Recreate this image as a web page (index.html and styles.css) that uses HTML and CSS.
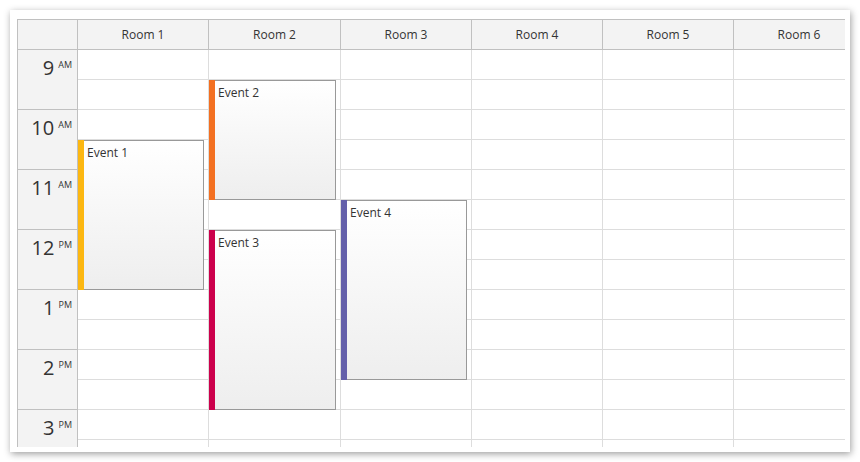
FILE: index.html
```html
<!DOCTYPE html>
<html>
<head>
<meta charset="utf-8">
<link rel="stylesheet" href="styles.css">
</head>
<body>
<div class="frame">
  <div class="cal">
    <div class="head">
      <div class="corner"></div>
      <div class="rh">Room 1</div>
      <div class="rh">Room 2</div>
      <div class="rh">Room 3</div>
      <div class="rh">Room 4</div>
      <div class="rh">Room 5</div>
      <div class="rh">Room 6</div>
    </div>
    <div class="body">
      <div class="times">
        <div class="hour"><span class="h">9</span><span class="ap">AM</span></div>
        <div class="hour"><span class="h">10</span><span class="ap">AM</span></div>
        <div class="hour"><span class="h">11</span><span class="ap">AM</span></div>
        <div class="hour"><span class="h">12</span><span class="ap">PM</span></div>
        <div class="hour"><span class="h">1</span><span class="ap">PM</span></div>
        <div class="hour"><span class="h">2</span><span class="ap">PM</span></div>
        <div class="hour"><span class="h">3</span><span class="ap">PM</span></div>
      </div>
      <div class="col">
        <div class="cell"></div><div class="cell"></div><div class="cell"></div><div class="cell"></div>
        <div class="cell"></div><div class="cell"></div><div class="cell"></div><div class="cell"></div>
        <div class="cell"></div><div class="cell"></div><div class="cell"></div><div class="cell"></div>
        <div class="cell"></div><div class="cell"></div>
        <div class="event" style="top:90px;height:150px"><div class="bar c-yellow"></div><div class="ebox">Event 1</div></div>
      </div>
      <div class="col">
        <div class="cell"></div><div class="cell"></div><div class="cell"></div><div class="cell"></div>
        <div class="cell"></div><div class="cell"></div><div class="cell"></div><div class="cell"></div>
        <div class="cell"></div><div class="cell"></div><div class="cell"></div><div class="cell"></div>
        <div class="cell"></div><div class="cell"></div>
        <div class="event" style="top:30px;height:120px"><div class="bar c-orange"></div><div class="ebox">Event 2</div></div>
        <div class="event" style="top:180px;height:180px"><div class="bar c-red"></div><div class="ebox">Event 3</div></div>
      </div>
      <div class="col">
        <div class="cell"></div><div class="cell"></div><div class="cell"></div><div class="cell"></div>
        <div class="cell"></div><div class="cell"></div><div class="cell"></div><div class="cell"></div>
        <div class="cell"></div><div class="cell"></div><div class="cell"></div><div class="cell"></div>
        <div class="cell"></div><div class="cell"></div>
        <div class="event" style="top:150px;height:180px"><div class="bar c-purple"></div><div class="ebox">Event 4</div></div>
      </div>
      <div class="col">
        <div class="cell"></div><div class="cell"></div><div class="cell"></div><div class="cell"></div>
        <div class="cell"></div><div class="cell"></div><div class="cell"></div><div class="cell"></div>
        <div class="cell"></div><div class="cell"></div><div class="cell"></div><div class="cell"></div>
        <div class="cell"></div><div class="cell"></div>
      </div>
      <div class="col">
        <div class="cell"></div><div class="cell"></div><div class="cell"></div><div class="cell"></div>
        <div class="cell"></div><div class="cell"></div><div class="cell"></div><div class="cell"></div>
        <div class="cell"></div><div class="cell"></div><div class="cell"></div><div class="cell"></div>
        <div class="cell"></div><div class="cell"></div>
      </div>
      <div class="col">
        <div class="cell"></div><div class="cell"></div><div class="cell"></div><div class="cell"></div>
        <div class="cell"></div><div class="cell"></div><div class="cell"></div><div class="cell"></div>
        <div class="cell"></div><div class="cell"></div><div class="cell"></div><div class="cell"></div>
        <div class="cell"></div><div class="cell"></div>
      </div>
    </div>
  </div>
</div>
</body>
</html>
```
FILE: styles.css
```css
html, body {
  margin: 0;
  padding: 0;
  background: #fff;
}
body {
  font-family: "Open Sans", "Noto Sans", sans-serif;
  color: #333;
}
.frame {
  margin: 10px;
  width: 840px;
  height: 442px;
  box-sizing: border-box;
  padding: 9px 5px 5px 7px;
  background: #fff;
  box-shadow: 1px 2px 7px rgba(0, 0, 0, 0.38);
}
.cal {
  width: 828px;
  height: 428px;
  overflow: hidden;
  box-sizing: border-box;
  border-left: 1px solid #c0c0c0;
  border-top: 1px solid #c0c0c0;
}
.head {
  display: flex;
  height: 30px;
  width: max-content;
}
.corner, .rh {
  flex: none;
  box-sizing: border-box;
  height: 30px;
  background: #f3f3f3;
  border-right: 1px solid #c0c0c0;
  border-bottom: 1px solid #c0c0c0;
}
.corner {
  width: 60px;
}
.rh {
  width: 131px;
  display: flex;
  align-items: center;
  justify-content: center;
  font-size: 12px;
  color: #333;
}
.rh:nth-child(3) {
  width: 132px;
}
.body {
  display: flex;
  width: max-content;
}
.times {
  flex: none;
  width: 60px;
  box-sizing: border-box;
  background: #f3f3f3;
  border-right: 1px solid #c0c0c0;
}
.hour {
  height: 60px;
  box-sizing: border-box;
  border-bottom: 1px solid #c0c0c0;
  text-align: right;
  padding: 4px 5px 0 0;
  white-space: nowrap;
}
.h {
  font-size: 20px;
  line-height: 27px;
  color: #333;
}
.ap {
  font-size: 9px;
  line-height: 22px;
  vertical-align: top;
  margin-left: 4px;
  color: #333;
}
.col {
  flex: none;
  position: relative;
  width: 131px;
  box-sizing: border-box;
  border-right: 1px solid #ddd;
}
.col:nth-child(3) {
  width: 132px;
}
.cell {
  height: 30px;
  box-sizing: border-box;
  border-bottom: 1px solid #ddd;
}
.event {
  position: absolute;
  left: 0;
  width: calc(100% - 4px);
  display: flex;
}
.bar {
  flex: none;
  width: 6px;
}
.ebox {
  flex: 1;
  box-sizing: border-box;
  border: 1px solid #999;
  border-left: none;
  background: linear-gradient(to bottom, #fff 0%, #eee 100%);
  font-size: 12px;
  color: #333;
  padding: 4px 0 0 3px;
  line-height: 16px;
}
.c-yellow { background: #fcb711; }
.c-orange { background: #f37021; }
.c-red { background: #cc004c; }
.c-purple { background: #6460aa; }
```
